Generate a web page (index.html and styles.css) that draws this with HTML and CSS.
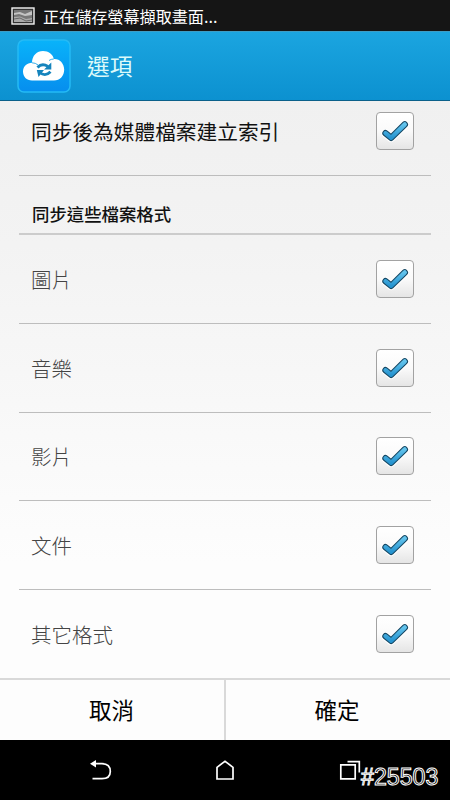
FILE: index.html
```html
<!DOCTYPE html>
<html lang="zh-Hant">
<head>
<meta charset="utf-8">
<title>選項</title>
<link rel="stylesheet" href="styles.css">
</head>
<body>
<svg class="defs" aria-hidden="true">
  <defs>
    <linearGradient id="tick" x1="0" y1="0" x2="0" y2="1"><stop offset="0" stop-color="#62c3ec"/><stop offset="1" stop-color="#2694d0"/></linearGradient>
    <symbol id="check" viewBox="0 0 36 36">
      <path d="M8.500 20.200 L14.200 24.800 L27.800 11.400" fill="none" stroke="#fff" stroke-width="8.600" stroke-linecap="round" stroke-linejoin="round"/>
      <path d="M8.500 20.200 L14.200 24.800 L27.800 11.400" fill="none" stroke="#174965" stroke-width="6.400" stroke-linecap="round" stroke-linejoin="round"/>
      <path d="M8.500 20.200 L14.200 24.800 L27.800 11.400" fill="none" stroke="url(#tick)" stroke-width="4.300" stroke-linecap="round" stroke-linejoin="round"/>
    </symbol>
  </defs>
</svg>
<div class="screen">
  <div class="status">
    <svg class="shot" width="24" height="18" viewBox="0 0 24 18">
      <rect x="1" y="1" width="22" height="16" fill="#333" stroke="#f2f2f2" stroke-width="1.4"/>
      <rect x="3" y="3" width="18" height="12" fill="#777"/>
      <path d="M3 6 L9 5 L14 7 L21 4 V8 L14 9 L8 7 L3 8Z" fill="#c4c4c4"/>
      <path d="M3 10 L9 9.5 L15 12 L21 11 V15 H3Z" fill="#aaa"/>
      <path d="M3 12 L9 11 L15 14 L21 13" fill="none" stroke="#666"/>
    </svg>
    <span>正在儲存螢幕擷取畫面...</span>
  </div>
  <header class="bar">
    <svg class="logo" width="54" height="54" viewBox="0 0 54 54">
      <defs><linearGradient id="app" x1="0" y1="0" x2="0" y2="1"><stop offset="0" stop-color="#09b3fa"/><stop offset="1" stop-color="#068eee"/></linearGradient></defs>
      <rect x="1" y="1" width="52" height="52" rx="6" fill="url(#app)" stroke="#25baf5" stroke-width="1.5"/>
      <path d="M15 41.500 C9.500 41.500 6 37.500 6 32.500 C6 27.500 10 23.800 15 23.800 C15 16.500 20 12 26 12 C31.500 12 36 15.500 36.800 20 C42.500 19.500 47.200 24.500 47.200 30.500 C47.200 37 43 41.500 37 41.500Z" fill="#fff"/>
      <path d="M15 23.800 Q18.500 23.800 21 26 M36.800 20 Q34 20 32 21.500" fill="none" stroke="#38aee8" stroke-width="1"/>
      <path d="M20.500 28.500 Q25 23.500 31 27.500" fill="none" stroke="#1584bd" stroke-width="2.800"/>
      <path d="M34.300 23.500 V30.500 H27Z M19.800 31 H27 L21.500 38Z" fill="#1584bd"/>
      <path d="M22.500 33.500 Q28.500 38 33.500 32.800" fill="none" stroke="#1584bd" stroke-width="2.800"/>
    </svg>
    <h1>選項</h1>
  </header>
  <main class="list">
    <div class="row first"><span>同步後為媒體檔案建立索引</span><svg class="box"><use href="#check"/></svg></div>
    <h2>同步這些檔案格式</h2>
    <div class="row"><span>圖片</span><svg class="box"><use href="#check"/></svg></div>
    <div class="row"><span>音樂</span><svg class="box"><use href="#check"/></svg></div>
    <div class="row"><span>影片</span><svg class="box"><use href="#check"/></svg></div>
    <div class="row"><span>文件</span><svg class="box"><use href="#check"/></svg></div>
    <div class="row last"><span>其它格式</span><svg class="box"><use href="#check"/></svg></div>
  </main>
  <div class="actions"><button>取消</button><button>確定</button></div>
  <nav class="nav">
    <svg width="450" height="60" viewBox="0 0 450 60" fill="none" stroke="#fff" stroke-width="1.700">
      <path d="M95 23.700 H102 Q110.300 24 110.300 31.500 Q110.300 38.700 102 38.700 H92.500"/>
      <path d="M90 23.700 L96 20 V27.500Z" fill="#fff" stroke="none"/>
      <path d="M217 39 V27.300 L225 21.200 L233 27.300 V39Z"/>
      <path d="M340.800 24.800 H355.200 V38.900 H340.800Z M347.500 21.700 H359.300 V32.500"/>
    </svg>
    <span class="tag">#25503</span>
  </nav>
</div>
</body>
</html>
```

FILE: styles.css
```css
* { box-sizing: border-box; }
body { margin: 0; font-family: "Noto Sans CJK TC", sans-serif; font-weight: 300; }
.defs { position: absolute; width: 0; height: 0; }
.screen { width: 450px; height: 800px; display: flex; flex-direction: column; overflow: hidden; background: #fff; }
.status { height: 31px; flex: none; display: flex; align-items: center; gap: 8px; padding-left: 11px; background: #151515; color: #fff; font-size: 16.1px; font-weight: 400; line-height: 28px; }
.shot { flex: none; }
.bar { height: 70px; flex: none; display: flex; align-items: center; gap: 16px; padding-left: 17px; background: linear-gradient(#1ba5e0, #0c91d0); border-top: 1px solid #3d9dc6; border-bottom: 1px solid #0b608a; }
h1 { margin: 0; color: #dcfafa; font-size: 22.7px; font-weight: 400; line-height: 32px; }
.list { height: 577px; flex: none; padding: 0 19px; overflow: hidden; background: linear-gradient(#f0f0f0, #f3f3f3 25%, #fdfdfd 80%); }
.row { height: 88.8px; display: flex; align-items: center; justify-content: space-between; padding: 0 17px 0 13px; border-bottom: 1px solid #bdbdbd; color: #444; font-size: 20.5px; line-height: 30px; }
.first { height: 89px; margin-top: -14px; color: #111; font-size: 20.7px; font-weight: 400; }
.last { height: 87px; border-bottom: 0; }
h2 { margin: 0; height: 59px; padding: 25px 13px 0; border-bottom: 2px solid #ccc; color: #111; font-size: 17.4px; font-weight: 500; line-height: 26px; }
.box { flex: none; width: 38px; height: 38px; border: 1px solid #a2a2a2; border-radius: 4px; background: linear-gradient(#fff, #fafafa 50%, #e5e5e5); }
.row span { margin-left: -1px; }
.actions { height: 62px; flex: none; display: grid; grid-template-columns: 1fr 1fr; border-top: 2px solid #d9d9d9; }
button { padding: 0 2px 2px 0; border: 0; background: #fdfdfd; color: #000; font: 400 22.5px/58px "Noto Sans CJK TC", sans-serif; }
button + button { border-left: 2px solid #d9d9d9; margin-left: -1px; }
.nav { position: relative; height: 60px; background: #000; }
.nav svg { display: block; }
.tag { position: absolute; left: 361px; top: 24px; font: 400 23.2px/26px "Liberation Sans", sans-serif; color: #000; -webkit-text-stroke: 1px #fff; }
```
